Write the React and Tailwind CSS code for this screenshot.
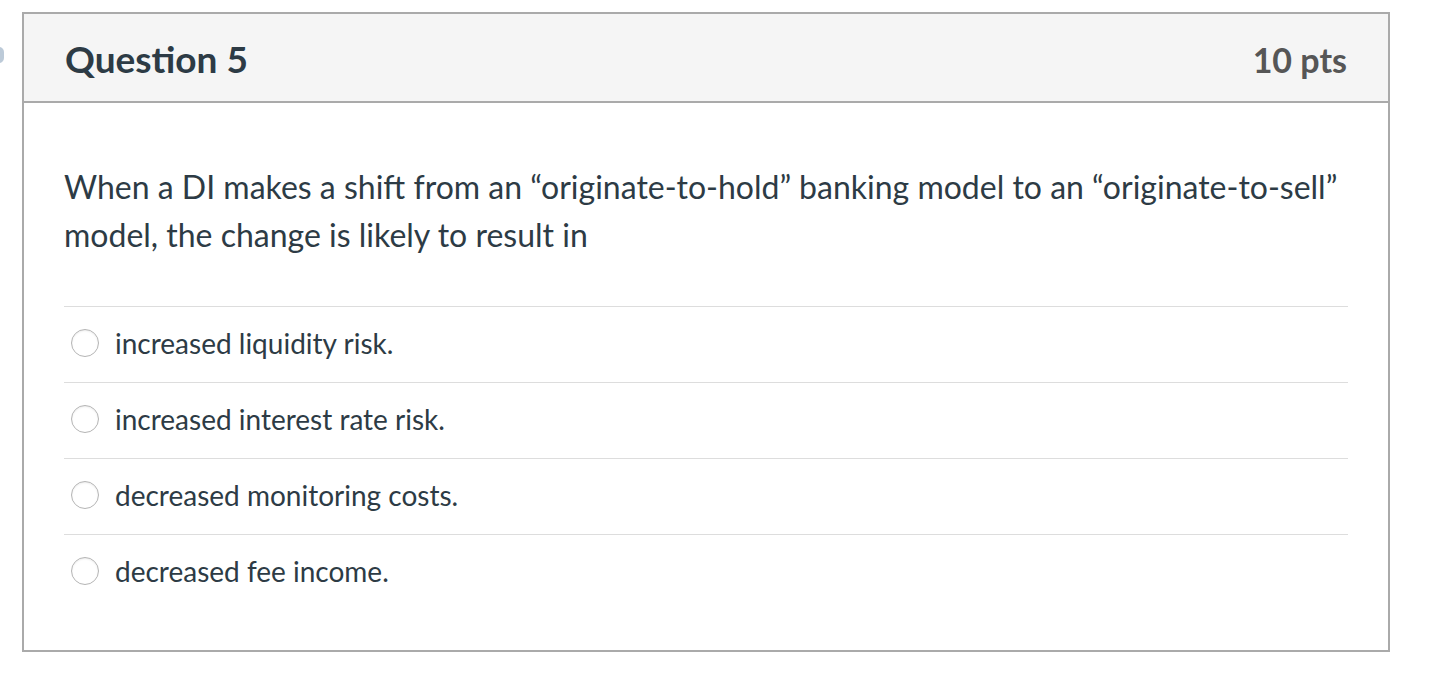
const answers = [
  'increased liquidity risk.',
  'increased interest rate risk.',
  'decreased monitoring costs.',
  'decreased fee income.',
];

export default function App() {
  return (
    <div className="relative w-[1432px] h-[674px] bg-white font-['Lato','Liberation_Sans',sans-serif] text-[#2d3b45]">
      <div className="absolute left-[-6px] top-[47px] w-[10px] h-[16px] rounded-full bg-[#9fb4c8] opacity-70" />
      <div className="pt-[12px] pl-[22px]">
        <div className="w-[1368px] h-[640px] border-2 border-[#aaaaaa] flex flex-col">
          <div className="h-[89px] bg-[#f5f5f5] border-b-2 border-[#aaaaaa] flex items-center justify-between px-[41px] pt-[3px]">
            <h2 className="text-[37px] font-bold text-[#2d3b45]">Question 5</h2>
            <span className="text-[34px] font-bold text-[#565656]">10 pts</span>
          </div>
          <div className="px-[40px] pt-[60px]">
            <p className="text-[32px] leading-[48px]">
              When a DI makes a shift from an “originate-to-hold” banking model to an “originate-to-sell”
              model, the change is likely to result in
            </p>
            <div className="mt-[47px]">
              {answers.map((a) => (
                <div key={a} className="flex items-center h-[76px] border-t border-[#dddddd]">
                  <span className="ml-[7px] mt-[-3px] w-[28px] h-[28px] rounded-full border border-[#b5b5b5] bg-white shadow-[inset_0_1px_2px_rgba(0,0,0,0.08)]" />
                  <span className="ml-[16px] text-[28px] mt-[-3px]">{a}</span>
                </div>
              ))}
            </div>
          </div>
        </div>
      </div>
    </div>
  );
}
